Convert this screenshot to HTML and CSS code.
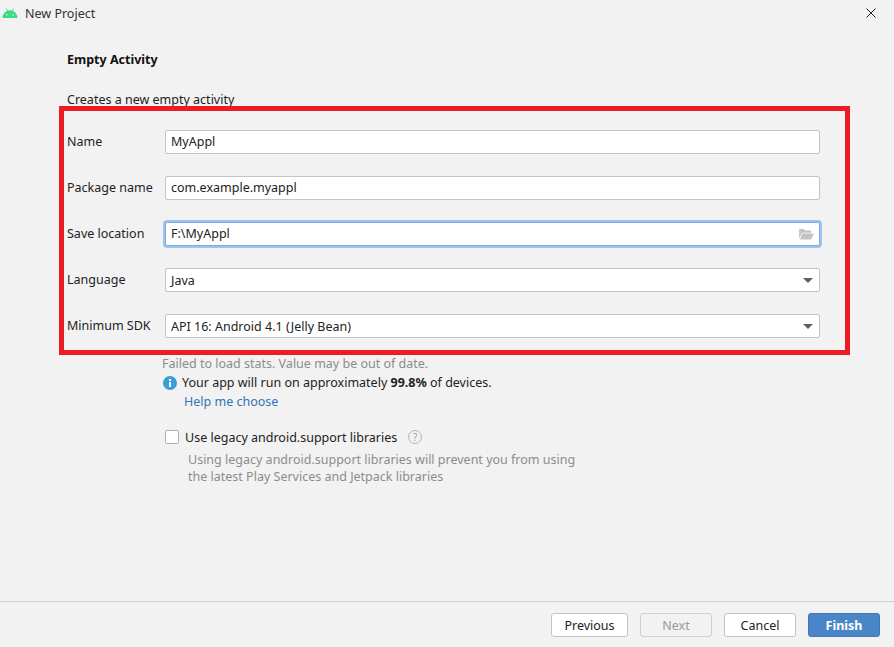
FILE: index.html
```html
<!DOCTYPE html>
<html lang="en">
<head>
    <meta charset="UTF-8">
    <meta name="viewport" content="width=device-width, initial-scale=1.0">
    <title>New Project</title>
    <link rel="stylesheet" href="styles.css">
</head>
<body>
    <div class="titlebar">
        <svg class="logo" width="16" height="10" viewBox="0 0 16 10.500">
            <path d="M0 10.500C.3 6.800 2.600 4 5.200 3L3.700.6l.6-.4L6 2.700a7 7 0 0 1 4 0L11.700.2l.6.4L10.800 3c2.600 1 4.900 3.800 5.200 7.500z" fill="#3ddc84"/>
            <circle cx="4.600" cy="7.200" r=".8" fill="#f2f2f2"/>
            <circle cx="11.400" cy="7.200" r=".8" fill="#f2f2f2"/>
        </svg>
        <span class="title">New Project</span>
        <svg class="close" width="10" height="10" viewBox="0 0 10 10">
            <path d="M.5.500l9 9M9.500.500l-9 9" stroke="#222" stroke-width="1" fill="none"/>
        </svg>
    </div>

    <div class="content">
        <h1>Empty Activity</h1>
        <p class="subtitle">Creates a new empty activity</p>

        <div class="form">
            <div class="row">
                <label>Name</label>
                <div class="field">MyAppl</div>
            </div>
            <div class="row">
                <label>Package name</label>
                <div class="field">com.example.myappl</div>
            </div>
            <div class="row">
                <label>Save location</label>
                <div class="field focused">
                    F:\MyAppl
                    <svg class="folder" width="15" height="11" viewBox="0 0 16 12">
                        <path d="M0 0h5l1.500 1.500H13V4H3L0 11z" fill="#c0c3c6"/>
                        <path d="M3.500 5H16l-3 6.500H.8z" fill="#c0c3c6"/>
                    </svg>
                </div>
            </div>
            <div class="row">
                <label>Language</label>
                <div class="field select">Java<span class="arrow"></span></div>
            </div>
            <div class="row">
                <label>Minimum SDK</label>
                <div class="field select">API 16: Android 4.1 (Jelly Bean)<span class="arrow"></span></div>
            </div>
        </div>

        <div class="stats">
            <p class="muted">Failed to load stats. Value may be out of date.</p>
            <p class="info">
                <svg width="14" height="14" viewBox="0 0 14 14">
                    <circle cx="7" cy="7" r="7" fill="#389fd6"/>
                    <rect x="6" y="6" width="2" height="5" fill="#fff"/>
                    <rect x="6" y="3" width="2" height="2" fill="#fff"/>
                </svg>
                <span>Your app will run on approximately <b>99.8%</b> of devices.</span>
            </p>
            <a class="help">Help me choose</a>
        </div>

        <div class="legacy">
            <div class="check-row">
                <span class="checkbox"></span>
                <span>Use legacy android.support libraries</span>
                <span class="question">?</span>
            </div>
            <p class="muted">Using legacy android.support libraries will prevent you from using<br>the latest Play Services and Jetpack libraries</p>
        </div>
    </div>

    <div class="footer">
        <button class="btn">Previous</button>
        <button class="btn disabled">Next</button>
        <button class="btn">Cancel</button>
        <button class="btn primary">Finish</button>
    </div>

    <div class="highlight"></div>
</body>
</html>
```

FILE: styles.css
```css
* {
    box-sizing: border-box;
}
html, body {
    height: 100%;
}
body {
    margin: 0;
    display: flex;
    flex-direction: column;
    position: relative;
    overflow: hidden;
    background: #f2f2f2;
    color: #1a1a1a;
    font-family: 'Noto Sans', sans-serif;
    font-size: 12.5px;
}
p {
    margin: 0;
}
.titlebar {
    display: flex;
    align-items: center;
    height: 28px;
    padding: 0 18px 2px 2px;
}
.logo {
    margin-bottom: 1px;
}
.title {
    margin-left: 7px;
    color: #333;
}
.close {
    margin-left: auto;
}
.content {
    padding-left: 67px;
    padding-right: 74px;
}
h1 {
    margin: 23px 0 0;
    font-size: 12.5px;
    line-height: 18px;
    font-weight: bold;
    color: #111;
}
.subtitle {
    margin-top: 22px;
    line-height: 18px;
    color: #222;
}
.form {
    margin-top: 21px;
    display: flex;
    flex-direction: column;
    gap: 22px;
}
.row {
    display: flex;
    align-items: center;
    height: 24px;
}
.row label {
    width: 98px;
    flex-shrink: 0;
    padding-bottom: 1px;
    color: #222;
}
.field {
    position: relative;
    flex: 1;
    height: 24px;
    line-height: 22px;
    padding-left: 5px;
    background: #fff;
    border: 1px solid #c4c4c4;
    border-radius: 2px;
    color: #222;
}
.field.select {
    line-height: 23px;
}
.field.focused {
    border-color: #7fa9dc;
    box-shadow: 0 0 0 2px #9cc4f0;
}
.folder {
    position: absolute;
    right: 5px;
    top: 6px;
}
.arrow {
    position: absolute;
    right: 6px;
    top: 9px;
    border-left: 5px solid transparent;
    border-right: 5px solid transparent;
    border-top: 5px solid #606060;
}
.muted {
    color: #8c8c8c;
}
.stats {
    margin: 17px 0 0 95px;
}
.stats .muted {
    line-height: 18px;
}
.info {
    display: flex;
    align-items: center;
    gap: 5px;
    margin-top: 1px;
    margin-left: 1px;
    line-height: 18px;
    color: #222;
}
.help {
    display: block;
    margin-top: 1px;
    margin-left: 22px;
    line-height: 18px;
    color: #2f75b5;
}
.legacy {
    margin: 17px 0 0 98px;
}
.check-row {
    display: flex;
    align-items: center;
    height: 18px;
    color: #222;
}
.checkbox {
    width: 14px;
    height: 14px;
    margin-right: 6px;
    background: #fff;
    border: 1px solid #b0b0b0;
    border-radius: 2px;
}
.question {
    width: 14px;
    height: 14px;
    margin-left: 11px;
    border: 1px solid #b5b5b5;
    border-radius: 50%;
    color: #a0a0a0;
    font-size: 10px;
    line-height: 12px;
    text-align: center;
}
.legacy .muted {
    margin-top: 5px;
    margin-left: 23px;
    line-height: 17px;
}
.footer {
    margin-top: auto;
    height: 46px;
    display: flex;
    justify-content: flex-end;
    gap: 12px;
    padding: 11px 14px 0 0;
    border-top: 1px solid #d1d1d1;
}
.btn {
    width: 72px;
    height: 24px;
    padding: 0;
    background: #fff;
    border: 1px solid #c4c4c4;
    border-radius: 3px;
    color: #222;
    font-family: inherit;
    font-size: 12.5px;
}
.btn:first-child {
    width: 77px;
}
.btn.disabled {
    background: #f2f2f2;
    border-color: #d0d0d0;
    color: #999;
}
.btn.primary {
    background: #4a86c7;
    border-color: #3f78b5;
    color: #fff;
    font-weight: bold;
}
.highlight {
    position: absolute;
    left: 59px;
    top: 106px;
    width: 791px;
    height: 249px;
    border: 5px solid #ed1c24;
}
```
